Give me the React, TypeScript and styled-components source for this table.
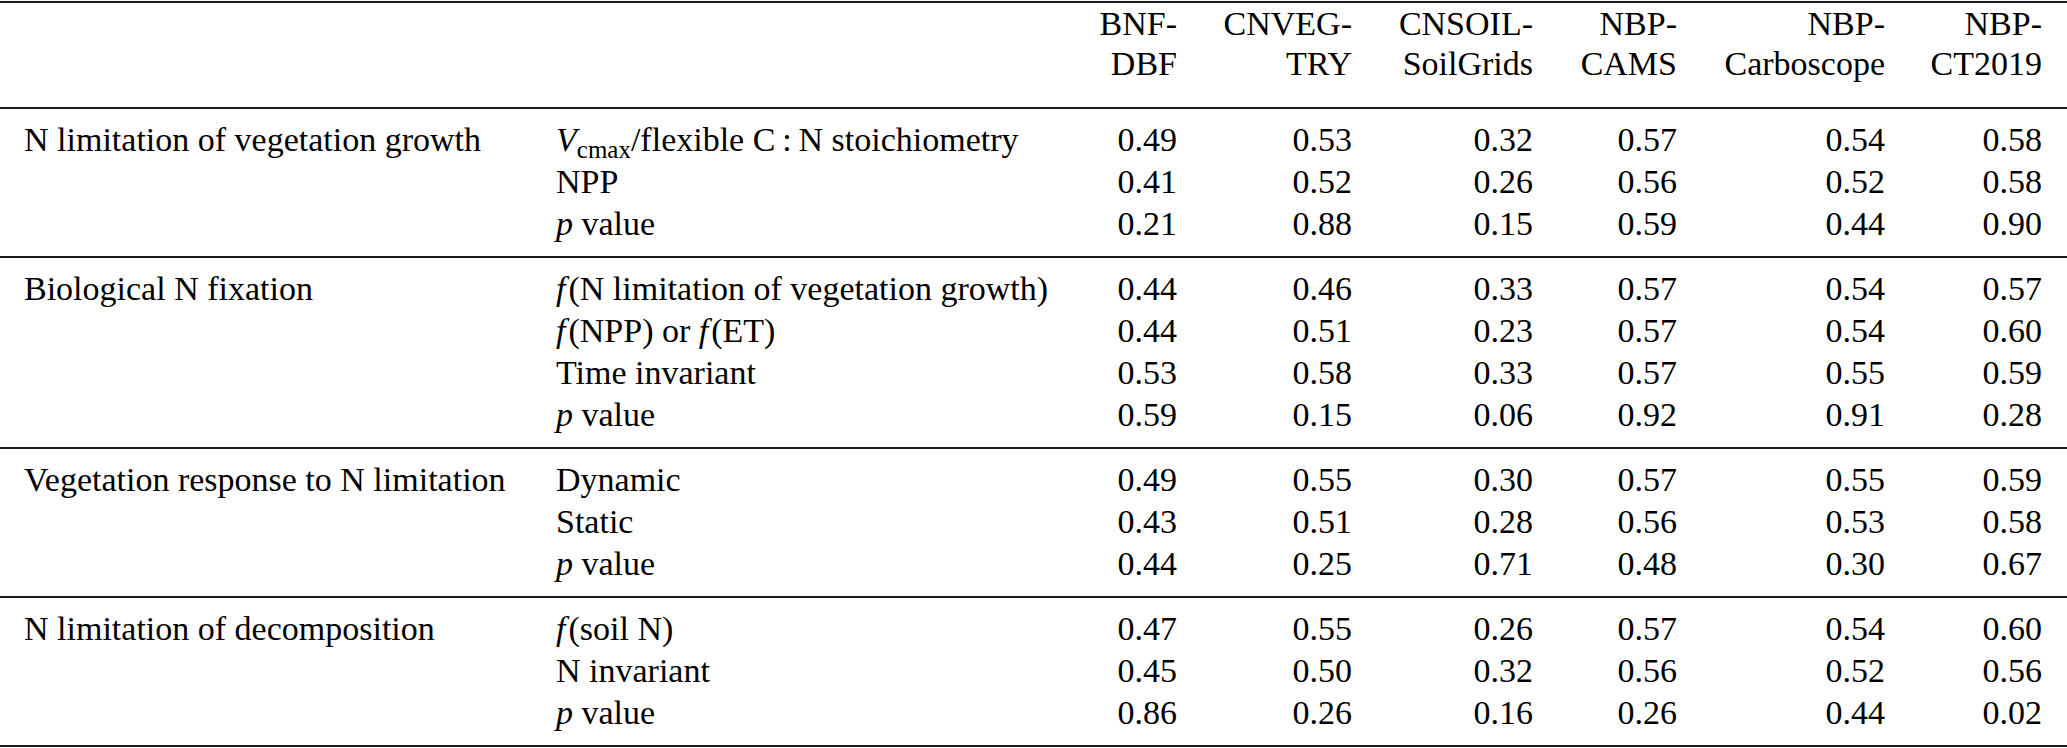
import React from "react";
import styled, { createGlobalStyle } from "styled-components";

const GlobalStyle = createGlobalStyle`
  html, body {
    margin: 0;
    padding: 0;
    background: #fff;
  }
  body {
    font-family: "Liberation Serif", "Times New Roman", serif;
    color: #000;
  }
`;

const COLUMNS = "532px 534px 87px 175px 181px 144px 208px 157px";

const Table = styled.div`
  width: 2067px;
  box-sizing: border-box;
  margin-top: 1px;
  padding: 0 25px 0 24px;
  border-top: 2px solid #1c1c1c;
  font-size: 34px;
`;

const HeaderRow = styled.div`
  display: grid;
  grid-template-columns: ${COLUMNS};
  padding: 1px 0 23px;
  line-height: 40px;
  margin: 0 -25px 0 -24px;
  padding-left: 24px;
  padding-right: 25px;
  border-bottom: 2px solid #1c1c1c;
`;

const Group = styled.div`
  margin: 0 -25px 0 -24px;
  padding: 10px 25px 11px 24px;
  border-bottom: 2px solid #1c1c1c;
`;

const Row = styled.div`
  display: grid;
  grid-template-columns: ${COLUMNS};
  line-height: 42px;
`;

const Cell = styled.div<{ $right?: boolean }>`
  white-space: nowrap;
  text-align: ${(p) => (p.$right ? "right" : "left")};
`;

const Italic = styled.i`
  font-style: italic;
`;

const FnName = styled.i`
  font-style: italic;
  margin-right: 3px;
`;

const Sub = styled.span`
  font-size: 25px;
  vertical-align: -7px;
  line-height: 0;
`;

const HEADERS: [string, string][] = [
  ["BNF-", "DBF"],
  ["CNVEG-", "TRY"],
  ["CNSOIL-", "SoilGrids"],
  ["NBP-", "CAMS"],
  ["NBP-", "Carboscope"],
  ["NBP-", "CT2019"],
];

const pValue = (
  <>
    <Italic>p</Italic> value
  </>
);

type DataRow = { name: React.ReactNode; values: string[] };
type DataGroup = { label: string; rows: DataRow[] };

const GROUPS: DataGroup[] = [
  {
    label: "N limitation of vegetation growth",
    rows: [
      {
        name: (
          <>
            <Italic>V</Italic>
            <Sub>cmax</Sub>/flexible C{"\u2009"}:{"\u2009"}N stoichiometry
          </>
        ),
        values: ["0.49", "0.53", "0.32", "0.57", "0.54", "0.58"],
      },
      { name: "NPP", values: ["0.41", "0.52", "0.26", "0.56", "0.52", "0.58"] },
      { name: pValue, values: ["0.21", "0.88", "0.15", "0.59", "0.44", "0.90"] },
    ],
  },
  {
    label: "Biological N fixation",
    rows: [
      {
        name: (
          <>
            <FnName>f</FnName>(N limitation of vegetation growth)
          </>
        ),
        values: ["0.44", "0.46", "0.33", "0.57", "0.54", "0.57"],
      },
      {
        name: (
          <>
            <FnName>f</FnName>(NPP) or <FnName>f</FnName>(ET)
          </>
        ),
        values: ["0.44", "0.51", "0.23", "0.57", "0.54", "0.60"],
      },
      { name: "Time invariant", values: ["0.53", "0.58", "0.33", "0.57", "0.55", "0.59"] },
      { name: pValue, values: ["0.59", "0.15", "0.06", "0.92", "0.91", "0.28"] },
    ],
  },
  {
    label: "Vegetation response to N limitation",
    rows: [
      { name: "Dynamic", values: ["0.49", "0.55", "0.30", "0.57", "0.55", "0.59"] },
      { name: "Static", values: ["0.43", "0.51", "0.28", "0.56", "0.53", "0.58"] },
      { name: pValue, values: ["0.44", "0.25", "0.71", "0.48", "0.30", "0.67"] },
    ],
  },
  {
    label: "N limitation of decomposition",
    rows: [
      {
        name: (
          <>
            <FnName>f</FnName>(soil N)
          </>
        ),
        values: ["0.47", "0.55", "0.26", "0.57", "0.54", "0.60"],
      },
      { name: "N invariant", values: ["0.45", "0.50", "0.32", "0.56", "0.52", "0.56"] },
      { name: pValue, values: ["0.86", "0.26", "0.16", "0.26", "0.44", "0.02"] },
    ],
  },
];

export default function App() {
  return (
    <>
      <GlobalStyle />
      <Table>
        <HeaderRow>
          <Cell />
          <Cell />
          {HEADERS.map(([top, bottom], i) => (
            <Cell key={i} $right>
              {top}
              <br />
              {bottom}
            </Cell>
          ))}
        </HeaderRow>
        {GROUPS.map((group) => (
          <Group key={group.label}>
            {group.rows.map((row, r) => (
              <Row key={r}>
                <Cell>{r === 0 ? group.label : ""}</Cell>
                <Cell>{row.name}</Cell>
                {row.values.map((v, c) => (
                  <Cell key={c} $right>
                    {v}
                  </Cell>
                ))}
              </Row>
            ))}
          </Group>
        ))}
      </Table>
    </>
  );
}
